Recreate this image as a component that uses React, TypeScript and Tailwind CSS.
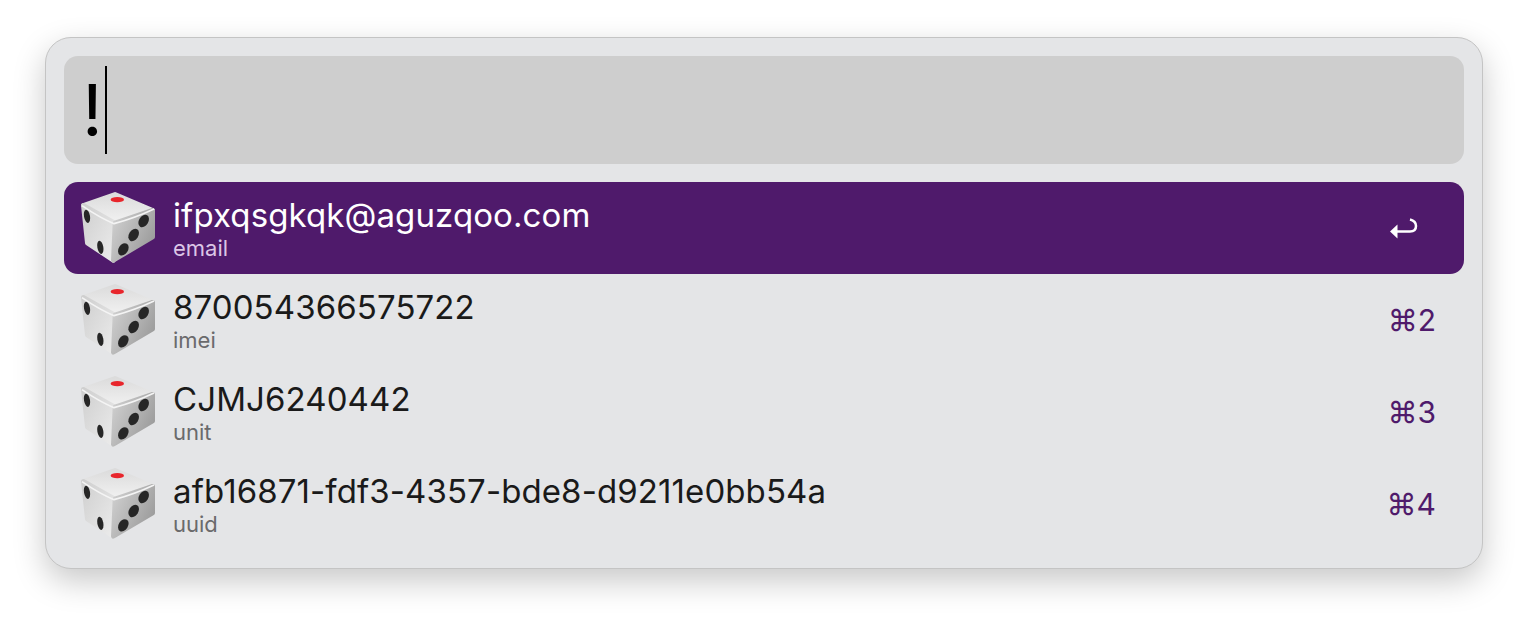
import { useId } from 'react';

const results = [
  { title: 'ifpxqsgkqk@aguzqoo.com', sub: 'email', hint: null },
  { title: '870054366575722', sub: 'imei', hint: '⌘2' },
  { title: 'CJMJ6240442', sub: 'unit', hint: '⌘3' },
  { title: 'afb16871-fdf3-4357-bde8-d9211e0bb54a', sub: 'uuid', hint: '⌘4' },
];

function Dice() {
  const id = useId();
  return (
    <svg viewBox="48 45 252 240" className="h-[80px] w-[84px] shrink-0">
      <defs>
        <linearGradient id={`${id}t`} x1="0" y1="0" x2="0" y2="1">
          <stop offset="0" stopColor="#dcdcdc" />
          <stop offset="1" stopColor="#f2f2f2" />
        </linearGradient>
        <linearGradient id={`${id}l`} x1="0" y1="0" x2="1" y2="1">
          <stop offset="0" stopColor="#cfcfcf" />
          <stop offset="1" stopColor="#ececec" />
        </linearGradient>
        <linearGradient id={`${id}r`} x1="0" y1="0" x2="1" y2="0.6">
          <stop offset="0" stopColor="#d2d2d2" />
          <stop offset="1" stopColor="#9e9e9e" />
        </linearGradient>
      </defs>
      <g strokeLinejoin="round" strokeWidth="14">
        <polygon points="70,97 165,64 278,112 165,150" fill={`url(#${id}t)`} stroke={`url(#${id}t)`} />
        <polygon points="70,97 165,150 160,262 82,210" fill={`url(#${id}l)`} stroke={`url(#${id}l)`} />
        <polygon points="165,150 278,112 278,192 160,262" fill={`url(#${id}r)`} stroke={`url(#${id}r)`} />
      </g>
      <path d="M66 98 Q120 135 162 152 Q225 135 282 108" fill="none" stroke="#f4f4f4" strokeWidth="5" />
      <ellipse cx="172" cy="80" rx="20" ry="8" fill="#e8262c" />
      <ellipse cx="81" cy="130" rx="9" ry="20" transform="rotate(-10 81 130)" fill="#262626" />
      <ellipse cx="121" cy="223" rx="9" ry="20" transform="rotate(-10 121 223)" fill="#262626" />
      <ellipse cx="251" cy="144" rx="14" ry="20" transform="rotate(32 251 144)" fill="#262626" />
      <ellipse cx="221" cy="186" rx="14" ry="20" transform="rotate(32 221 186)" fill="#262626" />
      <ellipse cx="190" cy="229" rx="14" ry="20" transform="rotate(32 190 229)" fill="#262626" />
    </svg>
  );
}

function ReturnIcon() {
  return (
    <svg viewBox="0 0 28 23" className="h-[23px] w-[28px]">
      <path d="M0 14.5 L7.5 7.5 V21.5 Z" fill="#fff" />
      <path d="M6 14.5 H20 C24 14.5 26 12.5 26 9 C26 5.5 24 3.5 20 2.5" fill="none" stroke="#fff" strokeWidth="2.5" />
    </svg>
  );
}

export default function App() {
  return (
    <div className="h-[622px] w-[1528px] overflow-hidden bg-white pl-[45px] pt-[37px] font-['Inter','Liberation_Sans',sans-serif]">
      <div className="flex h-[532px] w-[1438px] flex-col gap-[18px] rounded-[26px] border border-[#c4c4c4] bg-[#e4e5e7] p-[18px] shadow-[0_12px_32px_rgba(0,0,0,0.22)]">
        <div className="flex h-[108px] items-center rounded-[14px] bg-[#cecece] pl-[18px]">
          <span className="text-[72px] leading-none font-normal text-black">!</span>
          <div className="ml-[2px] h-[88px] w-[2px] bg-black" />
        </div>
        <div className="flex flex-col">
          {results.map((row, i) => (
            <div
              key={row.sub}
              className={
                i === 0
                  ? 'flex h-[92px] items-center rounded-[14px] bg-[#4f1a6b] pl-[12px] pr-[28px]'
                  : 'flex h-[92px] items-center rounded-[14px] pl-[12px] pr-[28px]'
              }
            >
              <Dice />
              <div className="ml-[13px] flex min-w-0 flex-1 flex-col">
                <div
                  className={
                    i === 0
                      ? 'text-[33px] leading-[40px] tracking-[0.1px] text-white'
                      : 'text-[33px] leading-[40px] tracking-[0.1px] text-[#1a1a1a]'
                  }
                >
                  {row.title}
                </div>
                <div
                  className={
                    i === 0
                      ? 'text-[22px] leading-[26px] text-[#dcc6e6]'
                      : 'text-[22px] leading-[26px] text-[#6a6a6c]'
                  }
                >
                  {row.sub}
                </div>
              </div>
              {row.hint ? (
                <span className="text-[30px] leading-none text-[#4f1a6b]">{row.hint}</span>
              ) : (
                <span className="mr-[18px]">
                  <ReturnIcon />
                </span>
              )}
            </div>
          ))}
        </div>
      </div>
    </div>
  );
}
